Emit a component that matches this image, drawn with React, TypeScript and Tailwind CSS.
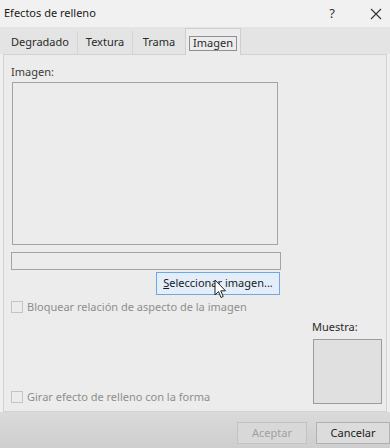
import React from "react";

function Checkbox({ label }: { label: string }) {
  return (
    <div className="flex items-center h-[12px]">
      <div className="w-[12px] h-[12px] border border-[#c4c4c4] bg-[#ececec]" />
      <span className="ml-[4px] text-[11px] leading-[12px] text-[#8e8e8e]">{label}</span>
    </div>
  );
}

export default function App() {
  return (
    <div
      className="relative w-[390px] h-[448px] overflow-hidden bg-[#efefef] text-[#222]"
      style={{ fontFamily: '"Segoe UI", "Noto Sans", sans-serif' }}
    >
      {/* Title bar */}
      <div className="h-[27px] flex items-center bg-[#f1f1f1]">
        <span className="ml-[4px] text-[11px] text-[#1a1a1a]">Efectos de relleno</span>
        <span className="ml-auto mr-[35px] text-[13px] text-[#333]">?</span>
        <svg width="12" height="12" viewBox="0 0 12 12" className="mr-[8px]">
          <path d="M1 1 L11 11 M11 1 L1 11" stroke="#333" strokeWidth="1.1" />
        </svg>
      </div>

      {/* Tab strip */}
      <div className="h-[27px] flex items-end bg-[#e4e4e4] pl-[3px] relative">
        <div className="w-[75px] h-[23px] flex items-center justify-center text-[11px] text-[#2a2a2a] border-r border-[#d6d6d6]">
          Degradado
        </div>
        <div className="w-[55px] h-[23px] flex items-center justify-center text-[11px] text-[#2a2a2a] border-r border-[#d6d6d6]">
          Textura
        </div>
        <div className="w-[52px] h-[23px] flex items-center justify-center text-[11px] text-[#2a2a2a]">
          Trama
        </div>
        <div className="w-[56px] h-[27px] -mb-[1px] flex items-center justify-center bg-[#ececec] border-t border-l border-r border-[#cfcfcf] relative z-10">
          <span className="mt-[3px] px-[3px] h-[15px] flex items-center border border-[#8f8f8f] text-[11px] text-[#2a2a2a]">
            Imagen
          </span>
        </div>
      </div>

      {/* Panel */}
      <div className="ml-[3px] mr-[3px] h-[358px] bg-[#ececec] border border-[#d2d2d2] flex flex-col pl-[7px]">
        <div className="mt-[10px] h-[14px] leading-[14px] text-[11px] text-[#3a3a3a]">Imagen:</div>
        <div className="mt-[3px] ml-[1px] w-[266px] h-[163px] border border-[#a4a4a4] bg-[#ececec]" />
        <div className="mt-[7px] w-[270px] h-[18px] border border-[#a4a4a4] bg-[#ececec]" />
        <div className="mt-[2px] ml-[145px] w-[124px] h-[23px] border border-[#6fa8de] bg-[#e3eefa] flex items-center justify-center text-[11px] text-[#1a1a1a]">
          <span>
            <span className="underline">S</span>eleccionar imagen...
          </span>
        </div>
        <div className="mt-[6px]">
          <Checkbox label="Bloquear relación de aspecto de la imagen" />
        </div>
        <div className="flex-1 flex items-end pb-[7px]">
          <div className="mb-[1px]">
            <Checkbox label="Girar efecto de relleno con la forma" />
          </div>
          <div className="ml-auto mr-[4px] flex flex-col">
            <div className="h-[14px] leading-[14px] text-[11px] text-[#2a2a2a] -ml-[1px]">Muestra:</div>
            <div className="mt-[5px] w-[69px] h-[65px] border border-[#9c9c9c] bg-[#e0e0e0]" />
          </div>
        </div>
      </div>

      {/* Footer */}
      <div className="h-[36px] bg-gradient-to-b from-[#dadada] to-[#cecece] flex items-start pt-[10px]">
        <div className="ml-[237px] w-[74px] h-[22px] border border-[#c2c2c2] bg-[#d8d8d8] flex items-center justify-center text-[11px] text-[#a0a0a0]">
          Aceptar
        </div>
        <div className="ml-[9px] w-[74px] h-[22px] shrink-0 border border-[#b0b0b0] bg-[#dcdcdc] flex items-center justify-center text-[11px] text-[#222]">
          Cancelar
        </div>
      </div>

      {/* Mouse cursor */}
      <svg
        width="13"
        height="20"
        viewBox="0 0 13 20"
        className="absolute left-[214px] top-[279px] z-20"
      >
        <path
          d="M1 1 L1 16 L4.5 12.5 L7 18.5 L9.2 17.5 L6.8 11.8 L11.5 11.8 Z"
          fill="#fff"
          stroke="#222"
          strokeWidth="1"
          strokeLinejoin="round"
        />
      </svg>
    </div>
  );
}
